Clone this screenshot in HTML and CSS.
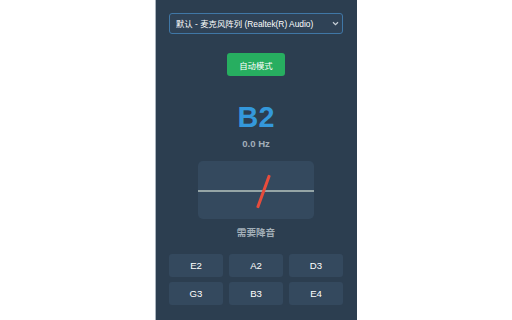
FILE: index.html
```html
<!DOCTYPE html>
<html lang="zh-CN">
  <head>
    <meta charset="UTF-8" />
    <meta name="viewport" content="width=device-width, initial-scale=1" />

    <title>吉他调音器</title>

    <link rel="stylesheet" href="styles.css">
  </head>

  <body>

    <div class="panel">

      <div class="device">
        <select id="device-select">
          <option>默认 - 麦克风阵列 (Realtek(R) Audio)</option>
        </select>
        <svg class="chevron" width="7" height="5" viewBox="0 0 7 5">
          <path d="M1 1.2 L3.5 3.6 L6 1.2" fill="none" stroke="#c9d1d9" stroke-width="1.2" />
        </svg>
      </div>

      <div class="mode-row">
        <button id="mode-btn">自动模式</button>
      </div>

      <div id="note">B2</div>
      <div id="freq">0.0 Hz</div>

      <div class="meter">
        <div class="meter-line"></div>
        <div class="needle"></div>
      </div>

      <div id="hint">需要降音</div>

      <div class="strings">
        <button class="string-btn">E2</button>
        <button class="string-btn">A2</button>
        <button class="string-btn">D3</button>
        <button class="string-btn">G3</button>
        <button class="string-btn">B3</button>
        <button class="string-btn">E4</button>
      </div>

    </div>
  </body>
</html>
```

FILE: styles.css
```css
body{
  margin: 0;
  background: #FFFFFF;
  font-family: "Liberation Sans", "Noto Sans CJK SC", sans-serif;
}

.panel{
  width: 202px;
  min-height: 100vh;
  margin: 0 auto;
  padding: 13px 14px 0 14px;
  box-sizing: border-box;
  background: #2c3e50;
  box-shadow: inset 1px 0 0 #aab4be;
}

.device{
  position: relative;
}

#device-select{
  display: block;
  width: 100%;
  height: 21px;
  padding: 0 14px 0 6px;
  border: 1px solid #4077a6;
  border-radius: 3px;
  background: #2f4256;
  color: #FFFFFF;
  font-family: "Liberation Sans", "Noto Sans CJK SC", sans-serif;
  font-size: 8.4px;
  appearance: none;
  -webkit-appearance: none;
  outline: none;
}

.chevron{
  position: absolute;
  right: 4px;
  top: 8px;
  pointer-events: none;
}

.mode-row{
  display: flex;
  justify-content: center;
  margin-top: 19px;
}

#mode-btn{
  height: 23px;
  padding: 0 12px;
  border: none;
  border-radius: 3px;
  background: #27ae60;
  color: #FFFFFF;
  font-family: "Liberation Sans", "Noto Sans CJK SC", sans-serif;
  font-size: 8.4px;
}

#note{
  margin-top: 24px;
  line-height: 34px;
  text-align: center;
  font-size: 28.8px;
  font-weight: bold;
  color: #3498db;
}

#freq{
  margin-top: 4px;
  line-height: 12px;
  text-align: center;
  font-size: 9.6px;
  font-weight: bold;
  color: #a3afb8;
}

.meter{
  position: relative;
  width: 116px;
  height: 58px;
  margin: 11px auto 0 auto;
  border-radius: 5px;
  background: #34495e;
  overflow: hidden;
}

.meter-line{
  position: absolute;
  left: 0;
  right: 0;
  top: 29px;
  height: 2px;
  background: #95a5a6;
}

.needle{
  position: absolute;
  left: 63.5px;
  top: 13px;
  width: 3px;
  height: 35px;
  border-radius: 1px;
  background: #e74c3c;
  transform: rotate(20deg);
}

#hint{
  margin-top: 8px;
  line-height: 12px;
  text-align: center;
  font-size: 9.6px;
  font-weight: bold;
  color: #a3afb8;
}

.strings{
  display: grid;
  grid-template-columns: repeat(3, 1fr);
  gap: 5px 6px;
  margin-top: 15px;
}

.string-btn{
  height: 23px;
  border: none;
  border-radius: 3px;
  background: #34495e;
  color: #FFFFFF;
  font-family: "Liberation Sans", "Noto Sans CJK SC", sans-serif;
  font-size: 9.6px;
}
```
